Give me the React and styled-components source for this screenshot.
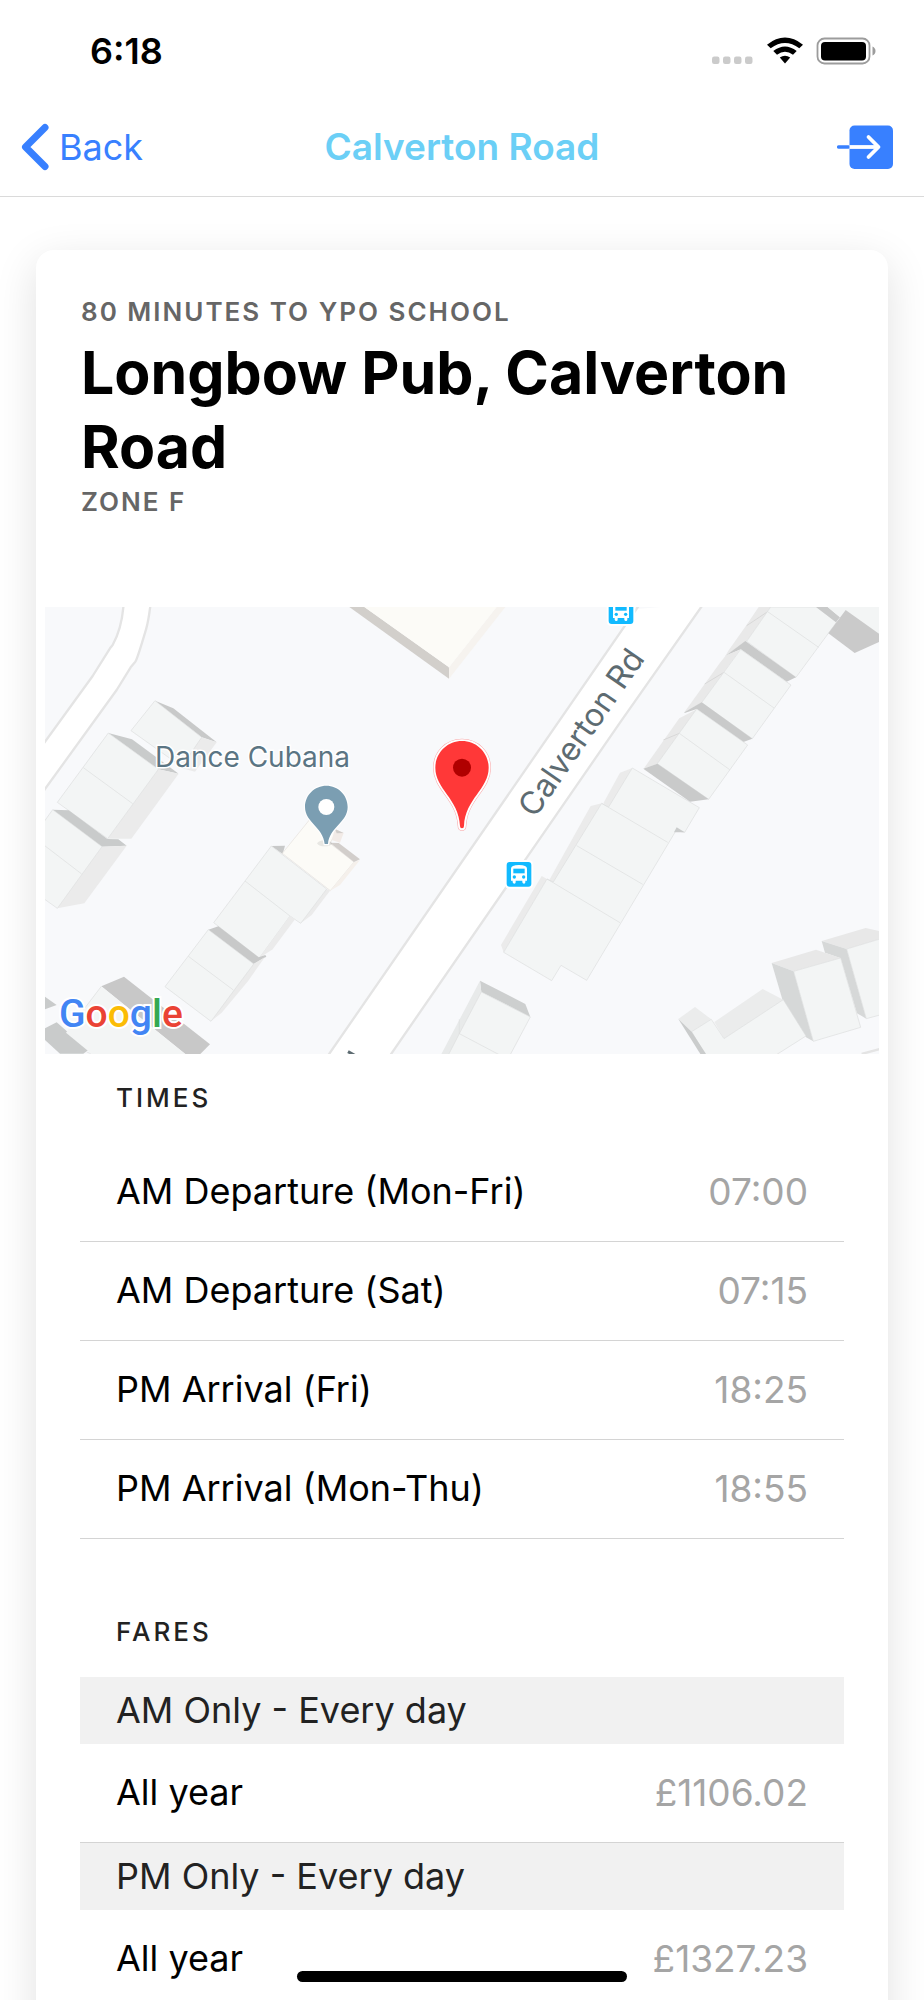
import React from "react";
import styled, { createGlobalStyle } from "styled-components";

const times = [
    { label: 'AM Departure (Mon-Fri)', value: '07:00' },
    { label: 'AM Departure (Sat)', value: '07:15' },
    { label: 'PM Arrival (Fri)', value: '18:25' },
    { label: 'PM Arrival (Mon-Thu)', value: '18:55' },
];

const fares = [
    { title: 'AM Only - Every day', rows: [{ label: 'All year', value: '£1106.02' }] },
    { title: 'PM Only - Every day', rows: [{ label: 'All year', value: '£1327.23' }] },
];

export default function App() {
    return <>
        <GlobalStyle />
        <Screen>
            <StatusBar>
                <Clock>6:18</Clock>
                <StatusIcons />
            </StatusBar>
            <NavBar>
                <BackButton type="button">
                    <BackIcon />
                    Back
                </BackButton>
                <NavTitle>Calverton Road</NavTitle>
                <ExitButton type="button" aria-label="Exit">
                    <ExitIcon />
                </ExitButton>
            </NavBar>
            <Content>
                <Card>
                    <CardHeader>
                        <Caption>80 minutes to YPO School</Caption>
                        <StopName>Longbow Pub, Calverton Road</StopName>
                        <Caption>Zone F</Caption>
                    </CardHeader>
                    <StopMap />
                    <SectionTitle>Times</SectionTitle>
                    <DataTable>
                        <tbody>
                            {times.map((row) => <DataRow key={row.label} {...row} />)}
                        </tbody>
                    </DataTable>
                    <SectionTitle $spaced>Fares</SectionTitle>
                    <DataTable>
                        {fares.map((group) => (
                            <tbody key={group.title}>
                                <tr>
                                    <GroupCell colSpan={2} scope="rowgroup">{group.title}</GroupCell>
                                </tr>
                                {group.rows.map((row) => <DataRow key={row.label} {...row} />)}
                            </tbody>
                        ))}
                    </DataTable>
                </Card>
            </Content>
            <HomeIndicator />
        </Screen>
    </>;
}

function DataRow({ label, value }) {
    return (
        <tr>
            <LabelCell scope="row">{label}</LabelCell>
            <ValueCell>{value}</ValueCell>
        </tr>
    );
}

function StatusIcons() {
    return (
        <svg width="164" height="28" viewBox="0 0 164 28" aria-hidden="true">
            <g fill="#cbcbcb">
                <rect x="0" y="19.500" width="7.500" height="7.500" rx="2.200" />
                <rect x="11" y="19.500" width="7.500" height="7.500" rx="2.200" />
                <rect x="22" y="19.500" width="7.500" height="7.500" rx="2.200" />
                <rect x="33" y="19.500" width="7.500" height="7.500" rx="2.200" />
            </g>
            <path d="M55 7.700Q73 -6.500 91 7.700L87.300 11.300Q73 .8 58.700 11.300Z" />
            <path d="M61.300 14Q73 4.800 84.700 14L81 17.700Q73 12 65 17.700Z" />
            <path d="M67.800 20.500Q73 16.800 78.200 20.500L73 26.500Z" />
            <rect x="105.500" y="1.500" width="52" height="25" rx="7" fill="none" stroke="#9c9c9c" strokeWidth="1.800" />
            <rect x="109" y="5" width="45" height="18.500" rx="4" />
            <path d="M160.500 9.500Q163.500 11 163.500 14T160.500 18.500Z" fill="#9c9c9c" />
        </svg>
    );
}

function BackIcon() {
    return (
        <svg width="28" height="48" viewBox="0 0 28 48" aria-hidden="true">
            <path d="M24 4.500L4.500 24L24 43.500" fill="none" stroke="#3880ff" strokeWidth="7" strokeLinecap="round" strokeLinejoin="round" />
        </svg>
    );
}

function ExitIcon() {
    return (
        <svg width="56" height="44" viewBox="0 0 56 44" fill="none" strokeLinecap="round" strokeLinejoin="round" aria-hidden="true">
            <rect x="12.500" y=".5" width="43.500" height="43.500" rx="5" fill="#3880ff" />
            <path d="M1.700 22H11.500" stroke="#3880ff" strokeWidth="3.500" />
            <path d="M12.500 22H40" stroke="#fff" strokeWidth="3.800" strokeLinecap="butt" />
            <path d="M31.500 12L41.500 22L31.500 32" stroke="#fff" strokeWidth="3.800" />
        </svg>
    );
}

function BusStop({ x, y }) {
    return (
        <g transform={`translate(${x} ${y})`}>
            <rect x="-6" y="-6" width="86" height="86" rx="14" fill="#fff" />
            <rect width="74" height="74" rx="9" fill="#12baff" />
            <path d="M13 20Q13 9 37 9T61 20V56H56V61Q56 65 52 65T47 61V56H27V61Q27 65 23 65T18 61V56H13Z" fill="#fff" />
            <rect x="20" y="20" width="34" height="14" fill="#12baff" />
            <circle cx="23" cy="45" r="5" fill="#12baff" />
            <circle cx="51" cy="45" r="5" fill="#12baff" />
        </g>
    );
}

// the tiles are drawn at 3x, the labels at 1x on top of them
function StopMap() {
    return (
        <MapFigure viewBox="0 0 834 447" preserveAspectRatio="xMidYMid slice" role="img" aria-label="Map of the stop">
            <rect width="834" height="447" fill="#f8f9fb" />
            <g transform="scale(.33333)">
                <g transform="translate(-45 -51)" strokeLinejoin="round">
                    <path d="M281 40Q276 115 248 165L240 175L188 258L40 462V604L260 300L302 232L316 215Q322 207 349 115Q356 90 362 40Z" fill="#fff" stroke="#e4e4e4" strokeWidth="7" />
                    <path d="M375 332L430 355L560 457L515 442Z" fill="#c8c9c9" />
                    <path d="M515 442L560 457L495 545L440 530Z" fill="#ebebeb" />
                    <path d="M375 332L515 442L455 530L303 422Z" fill="#f3f5f5" stroke="#dcdede" strokeWidth="2" />
                    <path d="M235 429L306 448L446 551L385 538Z" fill="#c9cbcb" />
                    <path d="M385 538L446 551L304 746L233 746Z" fill="#ebebeb" />
                    <path d="M235 429L385 538L233 746L82 637ZM160 533L308 641" fill="#f3f5f5" stroke="#dcdede" strokeWidth="2" />
                    <path d="M68 659L116 661L232 747L265 748L290 767L216 770Z" fill="#c9cbcb" />
                    <path d="M216 770L290 767L163 940L82 955Z" fill="#ebebeb" />
                    <path d="M68 659L216 770L82 955L30 918V712ZM35 760L155 852" fill="#f3f5f5" stroke="#dcdede" strokeWidth="2" />

                    <path d="M724 768L765 767L758 792Z" fill="#c8c9c9" />
                    <path d="M890 897L900 902L845 975L812 1000Z" fill="#ebebeb" />
                    <path d="M724 768L890 897L812 1000L780 978L688 1104L551 998ZM645 873L780 978" fill="#f3f5f5" stroke="#dcdede" strokeWidth="2" />
                    <path d="M780 978L795 988L728 1078L688 1104Z" fill="#ebebeb" />
                    <path d="M535 1019L565 1009L686 1102L706 1095L709 1100L671 1122Z" fill="#c8c9c9" />
                    <path d="M671 1122L705 1101L655 1172L575 1268L543 1294L610 1200Z" fill="#ebebeb" />
                    <path d="M535 1019L671 1122L543 1294L405 1190ZM475 1099L610 1200" fill="#f3f5f5" stroke="#dcdede" strokeWidth="2" />
                    <path d="M838 690L757 790L901 902L972 816L900 760L920 725Z" fill="#fcfbf7" stroke="#e5e1dc" strokeWidth="2" />
                    <path d="M972 816L990 810L930 885L901 902Z" fill="#f5f0eb" />
                    <path d="M900 758L926 759L990 808L972 816Z" fill="#d2cecb" />
                    <path d="M915 717L941 729L930 758L905 750Z" fill="#f2ebe7" />
                    <path d="M915 717L941 729L920 730Z" fill="#d2cecb" />

                    <path d="M45 1220L80 1245L45 1258Z" fill="#c9cbcb" />
                    <path d="M45 1315L80 1297L175 1380L160 1391H90L45 1350Z" fill="#c9cbcb" />
                    <path d="M214 1189L282 1160L540 1363L508 1395H470Z" fill="#c8c8c8" />
                    <path d="M214 1189L475 1400H195L108 1328Z" fill="#f3f5f5" />
                    <path d="M170 1386L182 1391M214 1189L160 1260" stroke="#dcdede" strokeWidth="2" />
                </g>
                <g transform="translate(885 -51)">
                    <path d="M28 51L327 266V232L73 51Z" fill="#d2cfcb" />
                    <path d="M327 266V232L470 51H496Z" fill="#f6f3ef" />
                    <path d="M73 51L327 232L470 51Z" fill="#fcfbf7" />
                    <path d="M-50 1417L890 57L1100 40L1082 51L840 398L145 1404Z" fill="#fff" />
                    <path d="M-50 1417L915 20M145 1404L840 398L1100 28" fill="none" stroke="#e4e4e4" strokeWidth="7" />
                    <path d="M24 1385L44 1396" stroke="#5d6b71" strokeWidth="9" />

                    <path d="M420 1172L556 1242L571 1281L424 1206Z" fill="#cdcfcf" />
                    <path d="M420 1172L424 1206L325 1400H300L359 1288Z" fill="#e8eaea" />
                    <path d="M424 1206L571 1281L505 1405H320L358 1331ZM358 1331L485 1398M358 1331V1288" fill="#f3f5f5" stroke="#dcdede" strokeWidth="2" />

                    <path d="M605 858L621 867L491 1087L483 1065Z" fill="#ebebeb" />
                    <path d="M752 648L785 640L642 880L628 870Z" fill="#ebebeb" />
                    <path d="M840 548L877 534L807 652L790 640Z" fill="#ebebeb" />
                    <path d="M877 534L1078 653L1034 727L1008 722L740 1171L663 1126L635 1172L491 1087L621 867L640 876L785 640L806 651ZM785 640L983 757M710 767L908 883M621 867L840 998" fill="#f3f5f5" stroke="#dcdede" strokeWidth="2" />
                    <path d="M1002 727L1010 712L1034 727Z" fill="#cacccc" />
                </g>
                <g transform="translate(1665 -51)">
                    <path d="M476 51H512L440 154L376 198L385 182L438 107Z" fill="#e9e9e9" />
                    <path d="M503 65L440 107" stroke="#cfcfcf" strokeWidth="2" />
                    <path d="M512 51L440 154L588 262L710 96L650 51ZM503 65L656 172" fill="#f3f5f5" stroke="#dcdede" strokeWidth="2" />
                    <path d="M376 198L436 153L588 262L560 275L422 178Z" fill="#c9caca" />

                    <path d="M420 179L305 338L253 367L359 220L378 196Z" fill="#e9e9e9" />
                    <path d="M372 247L314 282" stroke="#cfcfcf" strokeWidth="2" />
                    <path d="M422 178L573 285L457 446L305 338ZM372 247L522 354" fill="#f3f5f5" stroke="#dcdede" strokeWidth="2" />
                    <path d="M253 367L305 337L457 446L430 456L290 357L254 369Z" fill="#c9caca" />

                    <path d="M290 358L172 521L131 536L238 385Z" fill="#e9e9e9" />
                    <path d="M238 430L190 450" stroke="#cfcfcf" strokeWidth="2" />
                    <path d="M290 357L443 465L326 628L172 521ZM238 430L389 539" fill="#f3f5f5" stroke="#dcdede" strokeWidth="2" />
                    <path d="M130 536L172 521L326 628L270 635Z" fill="#c9caca" />

                    <path d="M648 51H683L720 82L708 97Z" fill="#c9caca" />
                    <path d="M683 51H840V135L737 60L720 82Z" fill="#f3f5f5" />
                    <path d="M737 60L840 133V155L764 189L685 130Z" fill="#cacaca" />

                    <path d="M665 1053L797 1014L840 1024V1047L740 1077Z" fill="#e8e8e8" />
                    <path d="M665 1053L740 1077L799 1286L771 1270L722 1105L675 1088Z" fill="#d6d8d8" />
                    <path d="M740 1077L840 1047V1275L799 1286Z" fill="#f3f5f5" stroke="#dcdede" strokeWidth="2" />
                    <path d="M515 1119L648 1079L722 1104L581 1144Z" fill="#e8e8e8" />
                    <path d="M515 1119L581 1144L640 1354L618 1342L547 1228Z" fill="#d6d8d8" />
                    <path d="M581 1144L722 1104L782 1312L640 1354Z" fill="#f3f5f5" stroke="#dcdede" strokeWidth="2" />
                    <path d="M235 1287L285 1251L334 1288L275 1325Z" fill="#ebecec" />
                    <path d="M343 1296L488 1197L550 1229L372 1346Z" fill="#ebecec" />
                    <path d="M275 1325L334 1288L372 1346L550 1229L618 1338L520 1400H318Z" fill="#f3f5f5" stroke="#dcdede" strokeWidth="2" />
                    <path d="M235 1287L275 1325L320 1395H303Z" fill="#cacccc" />
                    <path d="M785 1392L840 1377" stroke="#e4e4e4" strokeWidth="7" />
                </g>
                <BusStop x={1385} y={765} />
                <BusStop x={1691} y={-23} />
                <g transform="translate(-45 -51)">
                    <ellipse cx="884" cy="760" rx="22" ry="9" fill="#000" opacity=".08" />
                    <path d="M889 587C854 587 825 615 825 651C825 697 880 712 884 762H894C898 712 953 697 953 651C953 615 924 587 889 587Z" fill="#7b9eb2" stroke="#fff" strokeWidth="7" paintOrder="stroke" />
                    <circle cx="889" cy="651" r="24" fill="#fff" />
                </g>
                <g transform="translate(885 -51)">
                    <path d="M366 453C321 453 286 489 286 533C286 598 356 625 360 708Q360 715 366 715T372 708C376 625 446 598 446 533C446 489 411 453 366 453Z" fill="none" stroke="#f9a5a5" strokeWidth="14" />
                    <path d="M366 453C321 453 286 489 286 533C286 598 356 625 360 708Q360 715 366 715T372 708C376 625 446 598 446 533C446 489 411 453 366 453Z" fill="#ff3838" stroke="#fff" strokeWidth="11" paintOrder="stroke" />
                    <circle cx="366" cy="533" r="27" fill="#b00000" />
                </g>
            </g>
            <PlaceLabel x="110" y="160">Dance Cubana</PlaceLabel>
            <RoadLabel transform="translate(490 212) rotate(-55.400)">Calverton Rd</RoadLabel>
            <Brand x="14" y="420">
                <tspan fill="#4285f4">G</tspan>
                <tspan fill="#ea4335">o</tspan>
                <tspan fill="#fbbc05">o</tspan>
                <tspan fill="#4285f4">g</tspan>
                <tspan fill="#34a853">l</tspan>
                <tspan fill="#ea4335">e</tspan>
            </Brand>
        </MapFigure>
    );
}

const GlobalStyle = createGlobalStyle`
    * {
        box-sizing: border-box;
    }

    body {
        margin: 0;
        background-color: #fff;
        font-family: Inter, "Liberation Sans", sans-serif;
    }
`;

const Screen = styled.div`
    position: relative;
    display: flex;
    flex-direction: column;
    height: 100vh;
    overflow: hidden;
`;

const StatusBar = styled.div`
    flex: none;
    display: flex;
    justify-content: space-between;
    align-items: center;
    height: 97px;
    padding: 4px 48px 0 90px;
`;

const Clock = styled.span`
    font-size: 36px;
    font-weight: 600;
    color: #000;
`;

const NavBar = styled.header`
    flex: none;
    display: grid;
    grid-template-columns: 1fr auto 1fr;
    align-items: center;
    height: 100px;
    padding: 0 21px;
    border-bottom: 1px solid #dadada;
`;

const BackButton = styled.button`
    justify-self: start;
    display: flex;
    align-items: center;
    gap: 10px;
    padding: 0;
    border: none;
    background-color: transparent;
    color: #3880ff;
    font-family: inherit;
    font-size: 36px;
    cursor: pointer;
`;

const ExitButton = styled.button`
    justify-self: end;
    display: flex;
    margin-right: 10px;
    padding: 0;
    border: none;
    background-color: transparent;
    cursor: pointer;
`;

const NavTitle = styled.h1`
    margin: 0;
    font-size: 37px;
    font-weight: 600;
    color: #6bcff6;
`;

const Content = styled.main`
    flex: 1;
    min-height: 0;
    padding: 53px 36px;
    overflow-y: auto;
    scrollbar-width: none;
`;

const Card = styled.article`
    padding-bottom: 45px;
    border-radius: 18px;
    background-color: #fff;
    box-shadow: 0 12px 44px rgba(0, 0, 0, .12);
`;

const CardHeader = styled.div`
    padding: 44px 45px 87px;
`;

const Caption = styled.p`
    margin: 0;
    font-size: 26px;
    line-height: 36px;
    font-weight: 600;
    letter-spacing: 2px;
    text-transform: uppercase;
    color: #666;
`;

const StopName = styled.h2`
    margin: 6px 0 0;
    font-size: 59px;
    line-height: 74px;
    font-weight: 700;
    color: #000;
`;

const MapFigure = styled.svg`
    display: block;
    width: calc(100% - 18px);
    margin: 0 9px;
    aspect-ratio: 834 / 447;
`;

const PlaceLabel = styled.text`
    font-size: 28px;
    fill: #5b7583;
    stroke: #fff;
    stroke-width: 3px;
    paint-order: stroke;
`;

const RoadLabel = styled.text`
    font-size: 32px;
    fill: #5d6b71;
`;

const Brand = styled.text`
    font-family: Roboto, sans-serif;
    font-size: 39px;
    font-weight: 500;
    stroke: #fff;
    stroke-width: 4px;
    paint-order: stroke;
`;

const SectionTitle = styled.h3`
    height: 89px;
    margin: ${({ $spaced }) => $spaced ? '49px' : '0'} 80px 0;
    font-size: 26px;
    line-height: 87px;
    font-weight: 500;
    letter-spacing: 3px;
    text-transform: uppercase;
    color: #222;
`;

const DataTable = styled.table`
    width: calc(100% - 88px);
    margin: 0 44px;
    border-spacing: 0;
    font-size: 36px;
    text-align: left;
`;

const LabelCell = styled.th`
    height: 99px;
    padding: 0 0 2px 36px;
    border-bottom: 1px solid #d4d4d4;
    font-weight: 400;
    color: #000;
`;

const ValueCell = styled.td`
    height: 99px;
    padding: 0 36px 2px 0;
    border-bottom: 1px solid #d4d4d4;
    font-size: 37px;
    text-align: right;
    color: #a5a5a5;
`;

const GroupCell = styled.th`
    height: 67px;
    padding: 0 36px 2px;
    background-color: #f1f1f1;
    font-weight: 400;
    color: #222;
`;

const HomeIndicator = styled.div`
    position: absolute;
    bottom: 18px;
    left: 50%;
    width: 330px;
    height: 11px;
    margin-left: -165px;
    border-radius: 6px;
    background-color: #000;
`;
